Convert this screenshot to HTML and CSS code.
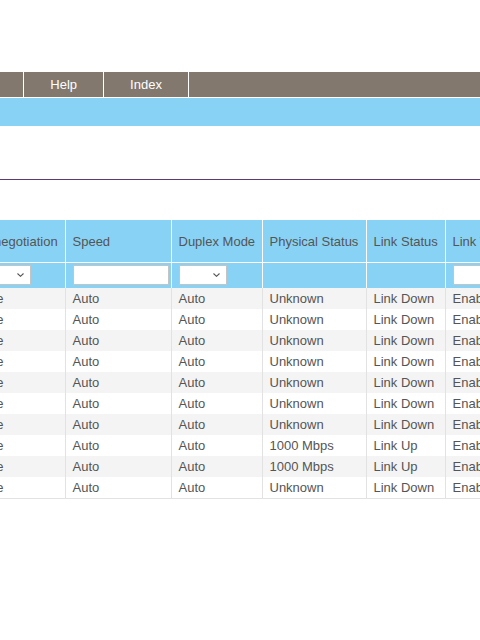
FILE: index.html
```html
<!DOCTYPE html>
<html lang="en">
<head>
    <meta charset="UTF-8">
    <meta name="viewport" content="width=device-width, initial-scale=1.0">
    <title>Port Settings</title>
    <link rel="stylesheet" href="styles.css">
</head>
<body>
    <div class="page">
        <div class="header"></div>
        <ul class="menu">
            <li class="menu-item">Tools</li>
            <li class="menu-item">Help</li>
            <li class="menu-item">Index</li>
        </ul>
        <div class="submenu"></div>
        <div class="title-area"></div>

        <div class="table-wrap">
            <table class="port-table">
                <colgroup>
                    <col class="c-auto">
                    <col class="c-speed">
                    <col class="c-duplex">
                    <col class="c-phys">
                    <col class="c-link">
                    <col class="c-trap">
                </colgroup>
                <thead>
                    <tr class="head-row">
                        <th>Auto-negotiation</th>
                        <th>Speed</th>
                        <th>Duplex Mode</th>
                        <th>Physical Status</th>
                        <th>Link Status</th>
                        <th>Link Trap</th>
                    </tr>
                    <tr class="filter-row">
                        <th><span class="select wide"><svg width="7" height="4" viewBox="0 0 7 4"><path d="M0.5 0.5 L3.5 3.3 L6.5 0.5" fill="none" stroke="#555" stroke-width="1.1"/></svg></span></th>
                        <th><span class="text-box speed-box"></span></th>
                        <th><span class="select"><svg width="7" height="4" viewBox="0 0 7 4"><path d="M0.5 0.5 L3.5 3.3 L6.5 0.5" fill="none" stroke="#555" stroke-width="1.1"/></svg></span></th>
                        <th></th>
                        <th></th>
                        <th><span class="text-box"></span></th>
                    </tr>
                </thead>
                <tbody>
                    <tr><td>Enable</td><td>Auto</td><td>Auto</td><td>Unknown</td><td>Link Down</td><td>Enable</td></tr>
                    <tr><td>Enable</td><td>Auto</td><td>Auto</td><td>Unknown</td><td>Link Down</td><td>Enable</td></tr>
                    <tr><td>Enable</td><td>Auto</td><td>Auto</td><td>Unknown</td><td>Link Down</td><td>Enable</td></tr>
                    <tr><td>Enable</td><td>Auto</td><td>Auto</td><td>Unknown</td><td>Link Down</td><td>Enable</td></tr>
                    <tr><td>Enable</td><td>Auto</td><td>Auto</td><td>Unknown</td><td>Link Down</td><td>Enable</td></tr>
                    <tr><td>Enable</td><td>Auto</td><td>Auto</td><td>Unknown</td><td>Link Down</td><td>Enable</td></tr>
                    <tr><td>Enable</td><td>Auto</td><td>Auto</td><td>Unknown</td><td>Link Down</td><td>Enable</td></tr>
                    <tr><td>Enable</td><td>Auto</td><td>Auto</td><td>1000 Mbps</td><td>Link Up</td><td>Enable</td></tr>
                    <tr><td>Enable</td><td>Auto</td><td>Auto</td><td>1000 Mbps</td><td>Link Up</td><td>Enable</td></tr>
                    <tr><td>Enable</td><td>Auto</td><td>Auto</td><td>Unknown</td><td>Link Down</td><td>Enable</td></tr>
                </tbody>
            </table>
        </div>
    </div>
</body>
</html>
```

FILE: styles.css
```css
html, body {
    margin: 0;
    padding: 0;
    background: #fff;
    overflow: hidden;
}
body {
    font-family: "Liberation Sans", Arial, sans-serif;
    font-size: 13px;
    color: #555;
}
.page {
    width: 480px;
    overflow: hidden;
}
.header {
    height: 72px;
}
.menu {
    display: flex;
    list-style: none;
    margin: 0 0 0 -59px;
    padding: 0;
    height: 25px;
    background: #82786e;
}
.menu-item {
    padding: 0 26px;
    line-height: 25px;
    color: #fff;
    border-right: 1px solid #fff;
    white-space: nowrap;
}
.submenu {
    margin-top: 1px;
    height: 28px;
    background: #88d3f5;
}
.title-area {
    height: 53px;
    border-bottom: 1px solid #5c3a78;
}
.table-wrap {
    margin: 40px 0 0 -44px;
}
.port-table {
    table-layout: fixed;
    border-collapse: collapse;
    width: 628px;
}
.c-auto { width: 109px; }
.c-speed { width: 106px; }
.c-duplex { width: 91px; }
.c-phys { width: 104px; }
.c-link { width: 79px; }
.c-trap { width: 139px; }
th {
    background: #88d3f5;
    font-weight: normal;
    text-align: left;
    padding: 0 7px;
    border-right: 1px solid #fff;
    white-space: nowrap;
    overflow: hidden;
}
.head-row th {
    height: 42px;
    border-bottom: 1px solid #fff;
}
.filter-row th {
    height: 25px;
    padding-top: 0;
    padding-bottom: 0;
}
.text-box,
.select {
    display: flex;
    box-sizing: border-box;
    height: 20px;
    margin-bottom: 1px;
    background: #fff;
    border: 1px solid #c4c4c4;
}
.speed-box {
    width: 96px;
}
.select {
    width: 48px;
    align-items: center;
    justify-content: flex-end;
    padding-right: 6px;
}
.select.wide {
    width: 68px;
}
td {
    height: 21px;
    padding: 0 7px;
    border-right: 1px solid #e2e2e2;
    white-space: nowrap;
    overflow: hidden;
}
tbody tr:nth-child(odd) td {
    background: #f4f4f4;
}
tbody tr:last-child td {
    border-bottom: 1px solid #e2e2e2;
}
```
